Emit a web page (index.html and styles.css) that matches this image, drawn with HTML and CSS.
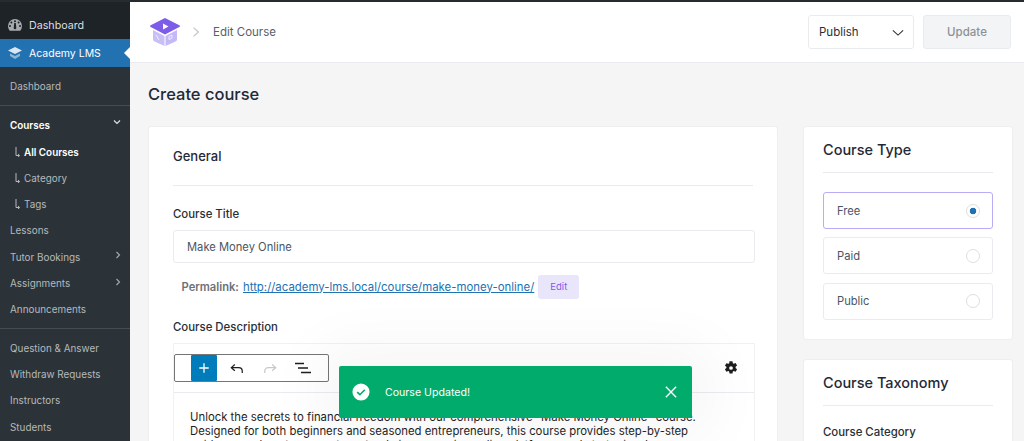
FILE: index.html
```html
<!DOCTYPE html>
<html lang="en">
<head>
<meta charset="utf-8">
<title>Edit Course</title>
<link rel="stylesheet" href="styles.css">
</head>
<body>
<div class="app">
  <aside class="sidebar">
    <a class="wp-item wp-first">
      <svg class="wp-icon" viewBox="0 0 14 12"><path fill="#a7aaad" fill-rule="evenodd" d="M7 0a7 7 0 0 0-7 7c0 1.900.7 3.500 1.800 4.700h10.400A7 7 0 0 0 14 7a7 7 0 0 0-7-7zM7 1.300a1 1 0 1 1 0 2 1 1 0 0 1 0-2zM3.400 2.600a1 1 0 1 1 0 2 1 1 0 0 1 0-2zm7.200 0a1 1 0 1 1 0 2 1 1 0 0 1 0-2zM2 6a1 1 0 1 1 0 2 1 1 0 0 1 0-2zm10 0a1 1 0 1 1 0 2 1 1 0 0 1 0-2zM6.200 4h1.600l.5 5a1.300 1.300 0 1 1-2.600 0z"/></svg>
      <span>Dashboard</span>
    </a>
    <a class="wp-item wp-active">
      <svg class="wp-icon" viewBox="0 0 14 12"><path fill="#dbe6f0" d="M7 0l7 3.500L7 7 0 3.500z"/><path fill="#8fb5d6" d="M2 6.500l5 2.500 5-2.500v2.500L7 12 2 9z"/></svg>
      <span>Academy LMS</span>
    </a>
    <nav class="submenu">
      <a class="sub-row sub-first">Dashboard</a>
      <div class="divider"></div>
      <a class="sub-row sub-strong">Courses
        <svg class="caret" viewBox="0 0 10 10"><path d="M2 3.500 5 6.500 8 3.500" fill="none" stroke="#e5e7ea" stroke-width="1.100"/></svg>
      </a>
      <a class="sub-row child child-on"><svg class="elbow" viewBox="0 0 6 10"><path d="M1 0v8.500h3M3 7l1.700 1.500L3 10" fill="none" stroke="#b4b9be" stroke-width="1"/></svg>All Courses</a>
      <a class="sub-row child"><svg class="elbow" viewBox="0 0 6 10"><path d="M1 0v8.500h3M3 7l1.700 1.500L3 10" fill="none" stroke="#b4b9be" stroke-width="1"/></svg>Category</a>
      <a class="sub-row child"><svg class="elbow" viewBox="0 0 6 10"><path d="M1 0v8.500h3M3 7l1.700 1.500L3 10" fill="none" stroke="#b4b9be" stroke-width="1"/></svg>Tags</a>
      <a class="sub-row">Lessons</a>
      <a class="sub-row">Tutor Bookings
        <svg class="caret" viewBox="0 0 10 10"><path d="M3.500 2 6.500 5 3.500 8" fill="none" stroke="#a7aaad" stroke-width="1.100"/></svg>
      </a>
      <a class="sub-row">Assignments
        <svg class="caret" viewBox="0 0 10 10"><path d="M3.500 2 6.500 5 3.500 8" fill="none" stroke="#a7aaad" stroke-width="1.100"/></svg>
      </a>
      <a class="sub-row">Announcements</a>
      <div class="divider divider-b"></div>
      <a class="sub-row">Question &amp; Answer</a>
      <a class="sub-row">Withdraw Requests</a>
      <a class="sub-row">Instructors</a>
      <a class="sub-row">Students</a>
    </nav>
  </aside>

  <div class="main">
    <header class="topbar">
      <div class="crumbs">
        <svg class="logo" viewBox="0 0 30 28">
          <path fill="#c9bff8" d="M3 12l11.500 6v10L4.500 23.500A2.500 2.500 0 0 1 3 21.200z"/>
          <path fill="#c4b9f8" d="M27 12l-11.500 6v10l10-4.500a2.500 2.500 0 0 0 1.500-2.300z"/>
          <path fill="#7c5ce8" d="M15 0l14.300 7.300a1 1 0 0 1 0 1.800L15 16.500.7 9.100a1 1 0 0 1 0-1.800z"/>
          <path fill="#fff" d="M13 5.500l5.500 3-5.500 3z"/>
          <path fill="none" stroke="#fff" stroke-width=".7" d="M2 10.500v8M6 17l3 5M19 21.500l0-3 3-1.500 0 3z"/>
        </svg>
        <svg class="crumb-sep" viewBox="0 0 10 14"><path d="M2 1.500 8 7 2 12.500" fill="none" stroke="#c3c4c7" stroke-width="1.500"/></svg>
        <span class="crumb-text">Edit Course</span>
      </div>
      <div class="actions">
        <div class="select">Publish
          <svg class="select-caret" viewBox="0 0 14 8"><path d="M1 1.500 7 7 13 1.500" fill="none" stroke="#2a2f36" stroke-width="1.200"/></svg>
        </div>
        <button class="update" type="button">Update</button>
      </div>
    </header>

    <div class="page">
      <h1 class="page-title">Create course</h1>
      <div class="columns">
        <section class="card general">
          <h2 class="card-head">General</h2>
          <div class="rule"></div>
          <label class="label">Course Title</label>
          <div class="input">Make Money Online</div>
          <div class="permalink">
            <span class="perma-label">Permalink:</span>
            <a class="perma-link">http://academy-lms.local/course/make-money-online/</a>
            <span class="perma-edit">Edit</span>
          </div>
          <label class="label label-desc">Course Description</label>
          <div class="editor">
            <div class="editor-bar">
              <div class="toolbar">
                <span class="tool tool-add">
                  <svg viewBox="0 0 14 14" class="ic-plus"><path d="M7 1.500v11M1.500 7h11" stroke="#fff" stroke-width="1.500"/></svg>
                </span>
                <span class="tool">
                  <svg viewBox="0 0 16 12" class="ic-arrow"><path d="M5.500 1.500 1.500 5l4 3.500M1.500 5H10a4 4 0 0 1 4 4v2" fill="none" stroke="#1e1e1e" stroke-width="1.400"/></svg>
                </span>
                <span class="tool">
                  <svg viewBox="0 0 16 12" class="ic-arrow"><path d="M10.500 1.500 14.500 5l-4 3.500M14.500 5H6a4 4 0 0 0-4 4v2" fill="none" stroke="#c6c8cb" stroke-width="1.400"/></svg>
                </span>
                <span class="tool">
                  <svg viewBox="0 0 16 12" class="ic-list"><path d="M0 1.500h9M3 6h10M6 10.500h10" fill="none" stroke="#1e1e1e" stroke-width="1.500"/></svg>
                </span>
              </div>
              <svg class="gear" viewBox="0 0 24 24"><path fill="#1e1e1e" fill-rule="evenodd" d="M9.500.5h5l.7 3.300 1.500.8 3.200-1.100 2.500 4.300-2.500 2.200v1.800l2.500 2.200-2.500 4.300-3.200-1.100-1.500.8-.7 3.300h-5l-.7-3.300-1.500-.8-3.200 1.100-2.500-4.300 2.500-2.200v-1.800L1.600 8.100l2.500-4.300 3.200 1.100 1.500-.8zM12 8.800a3.200 3.200 0 1 0 0 6.400 3.200 3.200 0 0 0 0-6.400z"/></svg>
            </div>
            <p class="editor-text">Unlock the secrets to financial freedom with our comprehensive "Make Money Online" course. Designed for both beginners and seasoned entrepreneurs, this course provides step-by-step guidance on how to generate a steady income using online platforms and strategies. Learn</p>
          </div>
        </section>

        <aside class="side">
          <section class="card type-card">
            <h2 class="side-head">Course Type</h2>
            <div class="rule side-rule"></div>
            <div class="option option-on"><span>Free</span><span class="radio radio-on"></span></div>
            <div class="option"><span>Paid</span><span class="radio"></span></div>
            <div class="option"><span>Public</span><span class="radio"></span></div>
          </section>
          <section class="card tax-card">
            <h2 class="side-head">Course Taxonomy</h2>
            <div class="rule side-rule"></div>
            <label class="label">Course Category</label>
          </section>
        </aside>
      </div>
    </div>
  </div>
</div>

<div class="toast">
  <svg class="toast-check" viewBox="0 0 20 20"><circle cx="10" cy="10" r="9.500" fill="#fff"/><path d="M5.800 10.200 8.800 13 14.200 7.500" fill="none" stroke="#00ab6b" stroke-width="1.800"/></svg>
  <span class="toast-text">Course Updated!</span>
  <svg class="toast-close" viewBox="0 0 14 14"><path d="M1 1 13 13M13 1 1 13" stroke="#fff" stroke-width="1.600"/></svg>
</div>
</body>
</html>
```
FILE: styles.css
```css
* { box-sizing: border-box; }
html, body { margin: 0; height: 100%; overflow: hidden; }
body { font-family: Inter, "Liberation Sans", sans-serif; color: #1f2937; background: #f5f5f5; }
.app { display: flex; height: 441px; overflow: hidden; border-top: 2px solid #262b30; }
.sidebar { width: 130px; flex: none; background: #2c3338; color: #c3c4c7; }
.wp-item { display: flex; align-items: center; gap: 7px; height: 37px; padding: 0 0 0 8px; color: #dcdfe2; font-size: 10.700px; background: #1d2327; }
.wp-first { padding-top: 9px; }
.wp-active { height: 28px; background: #2271b1; color: #fff; position: relative; font-size: 10.500px; }
.wp-active::after { content: ""; position: absolute; right: 0; top: 8px; border: 6px solid transparent; border-right-color: #fff; border-left-width: 0; }
.wp-icon { width: 14px; height: 12px; flex: none; }
.submenu { display: flex; flex-direction: column; padding-top: 7px; }
.sub-row { display: flex; align-items: center; height: 26.100px; padding: 0 10px; color: #b4b9be; flex: none; position: relative; font-size: 9.900px; }
.sub-first { height: 24px; }
.divider { height: 1px; background: #454c52; margin: 7px 0 6px; }
.divider-b { margin: 6px 0 6.500px; }
.sub-strong { color: #fff; font-weight: 600; margin-bottom: 1px; }
.child { padding-left: 15px; }
.child-on { color: #fff; font-weight: 600; }
.elbow { width: 6px; height: 10px; margin-right: 3px; flex: none; }
.caret { position: absolute; right: 7px; top: 7px; width: 10px; height: 10px; }
.sub-strong .caret { top: 5px; right: 8px; }

.main { flex: 1; min-width: 0; }
.topbar { display: flex; align-items: center; justify-content: space-between; height: 61px; padding: 0 13px 0 20px; background: #fff; border-bottom: 1px solid #e9ebee; }
.crumbs { display: flex; align-items: center; }
.logo { width: 30px; height: 28px; flex: none; }
.crumb-sep { width: 8px; height: 12px; margin: 0 13px 0 12px; }
.crumb-text { font-size: 11.500px; color: #57606a; }
.actions { display: flex; gap: 9px; }
.select { width: 106px; height: 34px; display: flex; align-items: center; justify-content: space-between; padding: 0 9px 0 10px; border: 1px solid #e9ebee; border-radius: 3px; font-size: 11.500px; color: #2a2f36; background: #fff; }
.select-caret { width: 12px; height: 7px; }
.update { width: 88px; height: 34px; border: 1px solid #e9ebee; border-radius: 3px; background: #f3f4f5; color: #8c9196; font: 500 11.500px Inter, "Liberation Sans", sans-serif; }

.page { padding: 0 11px 0 18px; }
.page-title { margin: 0; height: 63px; line-height: 62px; font-size: 16.500px; font-weight: 500; color: #1f2937; }
.columns { display: flex; gap: 25px; align-items: flex-start; }
.card { background: #fff; border: 1px solid #eceef0; border-radius: 3px; }
.general { width: 630px; height: 330px; padding: 0 24px; flex: none; }
.card-head { margin: 0; height: 58px; line-height: 58px; font-size: 13px; font-weight: 500; color: #1f2937; }
.rule { height: 1px; background: #e9ebee; }
.label { display: block; margin-top: 21px; height: 14px; line-height: 15px; font-size: 11.400px; font-weight: 500; color: #2a2f36; }
.input { margin-top: 9px; width: 582px; height: 33px; line-height: 32px; padding: 0 13px; border: 1px solid #e9ebee; border-radius: 3px; font-size: 11.200px; color: #4b5563; }
.permalink { display: flex; align-items: center; gap: 4px; height: 24px; margin-top: 12px; padding-left: 8.500px; font-size: 11.420px; }
.perma-label { font-weight: 600; color: #6b7177; font-size: 11.200px; line-height: 25px; }
.perma-link { color: #2271b1; text-decoration: underline; line-height: 25px; }
.perma-edit { width: 41px; height: 24px; line-height: 24px; text-align: center; background: #e9e6fb; border-radius: 3px; color: #7c5ce8; font-size: 9.500px; }
.label-desc { margin-top: 21px; }
.editor { margin-top: 9px; width: 582px; height: 120px; border: 1px solid #f0f1f2; }
.editor-bar { display: flex; align-items: center; justify-content: space-between; height: 49px; padding: 0 16px 0 0; border-bottom: 1px solid #e9ebee; }
.toolbar { display: flex; align-items: center; width: 155px; height: 28px; border: 1px solid #757575; border-radius: 2px; padding-left: 16px; }
.tool { display: flex; align-items: center; justify-content: center; width: 33px; height: 26px; flex: none; }
.tool-add { width: 26px; margin-right: 3px; background: #007cba; border-radius: 1px; }
.ic-plus { width: 12px; height: 12px; }
.ic-arrow { width: 14px; height: 11px; }
.ic-list { width: 16px; height: 12px; }
.gear { width: 14px; height: 14px; }
.editor-text { margin: 0; padding: 17px 16px 0; font-size: 11.350px; line-height: 14px; color: #1e1e1e; }

.side { width: 210px; flex: none; display: flex; flex-direction: column; gap: 19px; }
.type-card { height: 214px; padding: 0 19px; }
.tax-card { height: 120px; padding: 0 19px; }
.side-head { margin: 0; height: 45px; line-height: 46px; font-size: 14.500px; font-weight: 500; color: #1f2937; }
.side-rule { margin-bottom: 19px; }
.option { display: flex; align-items: center; justify-content: space-between; width: 170px; height: 37px; margin-bottom: 8.300px; padding: 0 12px 0 13px; border: 1px solid #e9ebee; border-radius: 3px; font-size: 11.200px; color: #4b5563; }
.option-on { border-color: #b9abf5; }
.radio { width: 14px; height: 14px; border-radius: 50%; border: 1px solid #dcdfe2; background: #fff; }
.radio-on { background: radial-gradient(circle, #2271b1 0 3px, #fff 3.600px); }
.tax-card .label { margin-top: 8px; }

.toast { position: absolute; left: 339px; top: 366px; width: 353px; height: 52px; display: flex; align-items: center; padding: 0 15px 0 13px; background: #00ab6b; border-radius: 2px; color: #fff; font-size: 10.600px; box-shadow: 0 0 60px 20px rgba(0,0,0,.04); }
.toast-check { width: 18px; height: 18px; flex: none; }
.toast-text { margin-left: 15px; flex: 1; }
.toast-close { width: 12px; height: 12px; flex: none; }
```
